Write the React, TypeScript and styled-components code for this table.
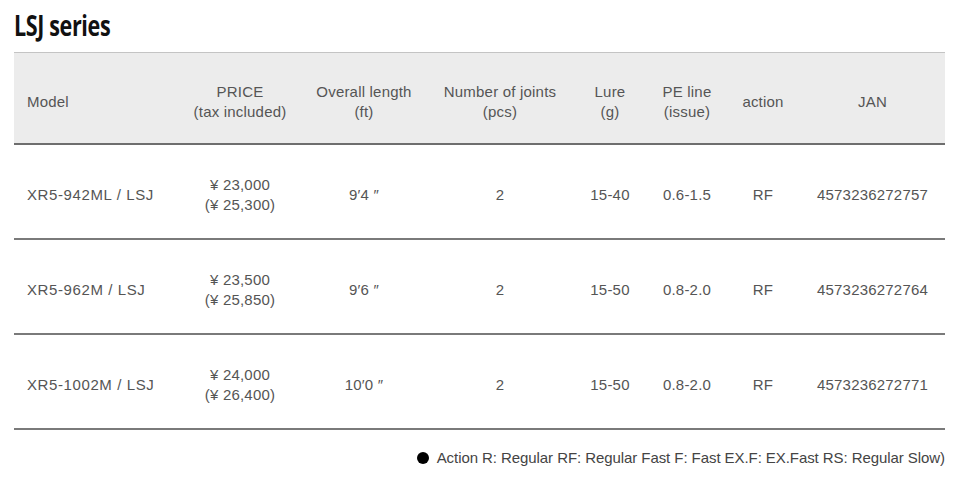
import styled, { createGlobalStyle } from "styled-components";

const GlobalStyle = createGlobalStyle`
  body {
    margin: 0;
    background: #fff;
    font-family: "Liberation Sans", Arial, sans-serif;
  }
`;

const Page = styled.div`
  width: 960px;
  padding: 0 15px 0 14px;
  box-sizing: border-box;
`;

const Title = styled.h2`
  margin: 0;
  height: 52px;
  line-height: 50px;
  font-family: "Open Sans", sans-serif;
  font-weight: 700;
  font-size: 28px;
  color: #111;
  letter-spacing: -0.5px;
  transform: scaleX(0.77);
  transform-origin: left center;
  white-space: nowrap;
`;

const cols = "166px 120px 128px 144px 76px 78px 74px 145px";

const HeadRow = styled.div`
  display: grid;
  grid-template-columns: ${cols};
  height: 93px;
  box-sizing: border-box;
  background: #ececec;
  border-top: 1px solid #c4c4c4;
  border-bottom: 2px solid #6e6e6e;
`;

const Row = styled.div`
  display: grid;
  grid-template-columns: ${cols};
  height: 95px;
  box-sizing: border-box;
  border-bottom: 2px solid #7a7a7a;
`;

const Cell = styled.div<{ $left?: boolean; $wide?: boolean }>`
  display: flex;
  flex-direction: column;
  justify-content: center;
  align-items: ${(p) => (p.$left ? "flex-start" : "center")};
  padding-left: ${(p) => (p.$left ? "13px" : "0")};
  padding-top: 7px;
  font-size: 15px;
  line-height: 20px;
  color: #555;
  letter-spacing: ${(p) => (p.$wide ? "0.6px" : "0.2px")};
  text-align: center;
  white-space: nowrap;
`;

const Note = styled.div`
  display: flex;
  justify-content: flex-end;
  align-items: center;
  gap: 8px;
  margin-top: 18px;
  font-size: 15px;
  line-height: 20px;
  color: #444;
  letter-spacing: -0.07px;
`;

const Dot = styled.span`
  width: 12px;
  height: 12px;
  border-radius: 50%;
  background: #000;
`;

const head: string[][] = [
  ["Model"],
  ["PRICE", "(tax included)"],
  ["Overall length", "(ft)"],
  ["Number of joints", "(pcs)"],
  ["Lure", "(g)"],
  ["PE line", "(issue)"],
  ["action"],
  ["JAN"],
];

const rows = [
  ["XR5-942ML / LSJ", "¥ 23,000|(¥ 25,300)", "9′4 ″", "2", "15-40", "0.6-1.5", "RF", "4573236272757"],
  ["XR5-962M / LSJ", "¥ 23,500|(¥ 25,850)", "9′6 ″", "2", "15-50", "0.8-2.0", "RF", "4573236272764"],
  ["XR5-1002M / LSJ", "¥ 24,000|(¥ 26,400)", "10′0 ″", "2", "15-50", "0.8-2.0", "RF", "4573236272771"],
];

export default function App() {
  return (
    <Page>
      <GlobalStyle />
      <Title>LSJ series</Title>
      <HeadRow>
        {head.map((lines, i) => (
          <Cell key={i} $left={i === 0}>
            {lines.map((l) => (
              <span key={l}>{l}</span>
            ))}
          </Cell>
        ))}
      </HeadRow>
      {rows.map((r) => (
        <Row key={r[0]}>
          {r.map((v, i) => (
            <Cell key={i} $left={i === 0} $wide={i === 0}>
              {v.split("|").map((l) => (
                <span key={l}>{l}</span>
              ))}
            </Cell>
          ))}
        </Row>
      ))}
      <Note>
        <Dot />
        <span>Action R: Regular RF: Regular Fast F: Fast EX.F: EX.Fast RS: Regular Slow)</span>
      </Note>
    </Page>
  );
}
